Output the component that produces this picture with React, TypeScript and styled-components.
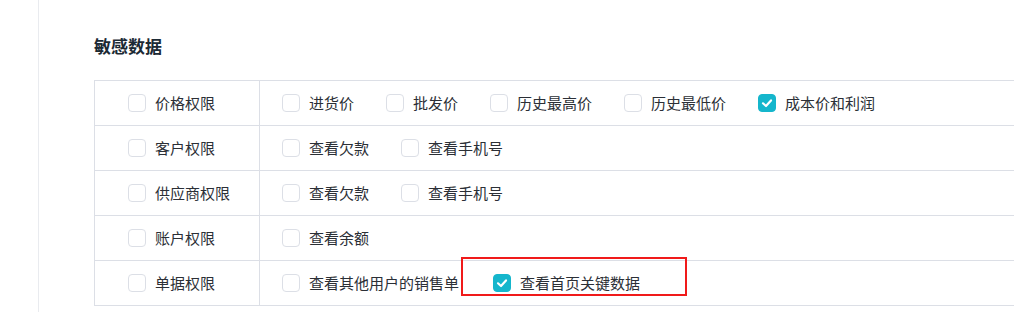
import { FC } from 'react';
import styled, { createGlobalStyle } from 'styled-components';

const GlobalStyle = createGlobalStyle`
  html, body {
    margin: 0;
    padding: 0;
    background: #ffffff;
    overflow: hidden;
  }
  body {
    font-family: "Noto Sans CJK SC", "Noto Sans", sans-serif;
  }
`;

const Page = styled.div`
  display: flex;
  height: 312px;
  width: 1014px;
  overflow: hidden;
`;

const Side = styled.aside`
  flex: 0 0 38px;
  border-right: 1px solid #e9ebef;
`;

const Main = styled.main`
  flex: 1;
  padding: 33px 0 0 55px;
  min-width: 0;
`;

const Title = styled.h2`
  margin: 0 0 22px;
  font-size: 17px;
  line-height: 25px;
  font-weight: 700;
  color: #1c2a35;
`;

const Table = styled.div`
  width: 960px;
  border-top: 1px solid #dcdfe6;
  border-left: 1px solid #dcdfe6;
`;

const Row = styled.div`
  display: flex;
  box-sizing: border-box;
  height: 45px;
  border-bottom: 1px solid #dcdfe6;
`;

const NameCell = styled.div`
  flex: 0 0 165px;
  min-width: 0;
  display: flex;
  align-items: center;
  padding-left: 33px;
  box-sizing: border-box;
  border-right: 1px solid #dcdfe6;
`;

const OptionsCell = styled.div`
  flex: 1;
  min-width: 0;
  display: flex;
  align-items: center;
  padding-left: 22px;
`;

const Option = styled.label<{ $highlight?: boolean }>`
  position: relative;
  display: inline-flex;
  align-items: center;
  margin-right: 32px;
  font-size: 15px;
  line-height: 20px;
  color: #2b2f36;
  white-space: nowrap;
  cursor: pointer;

  &:last-child {
    margin-right: 0;
  }

  ${({ $highlight }) =>
    $highlight &&
    `
    margin-left: 2px;
    &::after {
      content: '';
      position: absolute;
      left: -32px;
      top: -16px;
      width: 222px;
      height: 35px;
      border: 2px solid #f01a1a;
      pointer-events: none;
    }
  `}
`;

const Box = styled.span<{ $checked?: boolean }>`
  flex: 0 0 auto;
  width: 16px;
  height: 16px;
  margin-right: 9px;
  border-radius: 4px;
  border: 1px solid ${({ $checked }) => ($checked ? '#15b6cc' : '#dcdfe6')};
  background: ${({ $checked }) => ($checked ? '#15b6cc' : '#ffffff')};
  display: flex;
  align-items: center;
  justify-content: center;
`;

const Check = () => (
  <svg width="14" height="14" viewBox="0 0 14 14">
    <path
      d="M3 7.3 L6 10 L11 4.4"
      fill="none"
      stroke="#ffffff"
      strokeWidth="2.2"
      strokeLinecap="round"
      strokeLinejoin="round"
    />
  </svg>
);

type Item = { label: string; checked?: boolean; highlight?: boolean };

const rows: { name: string; items: Item[] }[] = [
  {
    name: '价格权限',
    items: [
      { label: '进货价' },
      { label: '批发价' },
      { label: '历史最高价' },
      { label: '历史最低价' },
      { label: '成本价和利润', checked: true },
    ],
  },
  { name: '客户权限', items: [{ label: '查看欠款' }, { label: '查看手机号' }] },
  { name: '供应商权限', items: [{ label: '查看欠款' }, { label: '查看手机号' }] },
  { name: '账户权限', items: [{ label: '查看余额' }] },
  {
    name: '单据权限',
    items: [
      { label: '查看其他用户的销售单' },
      { label: '查看首页关键数据', checked: true, highlight: true },
    ],
  },
];

const CheckOption: FC<Item> = ({ label, checked, highlight }) => (
  <Option $highlight={highlight}>
    <Box $checked={checked}>{checked && <Check />}</Box>
    {label}
  </Option>
);

export default function App() {
  return (
    <>
      <GlobalStyle />
      <Page>
        <Side />
        <Main>
          <Title>敏感数据</Title>
          <Table>
            {rows.map((row) => (
              <Row key={row.name}>
                <NameCell>
                  <CheckOption label={row.name} />
                </NameCell>
                <OptionsCell>
                  {row.items.map((item) => (
                    <CheckOption key={item.label} {...item} />
                  ))}
                </OptionsCell>
              </Row>
            ))}
          </Table>
        </Main>
      </Page>
    </>
  );
}
